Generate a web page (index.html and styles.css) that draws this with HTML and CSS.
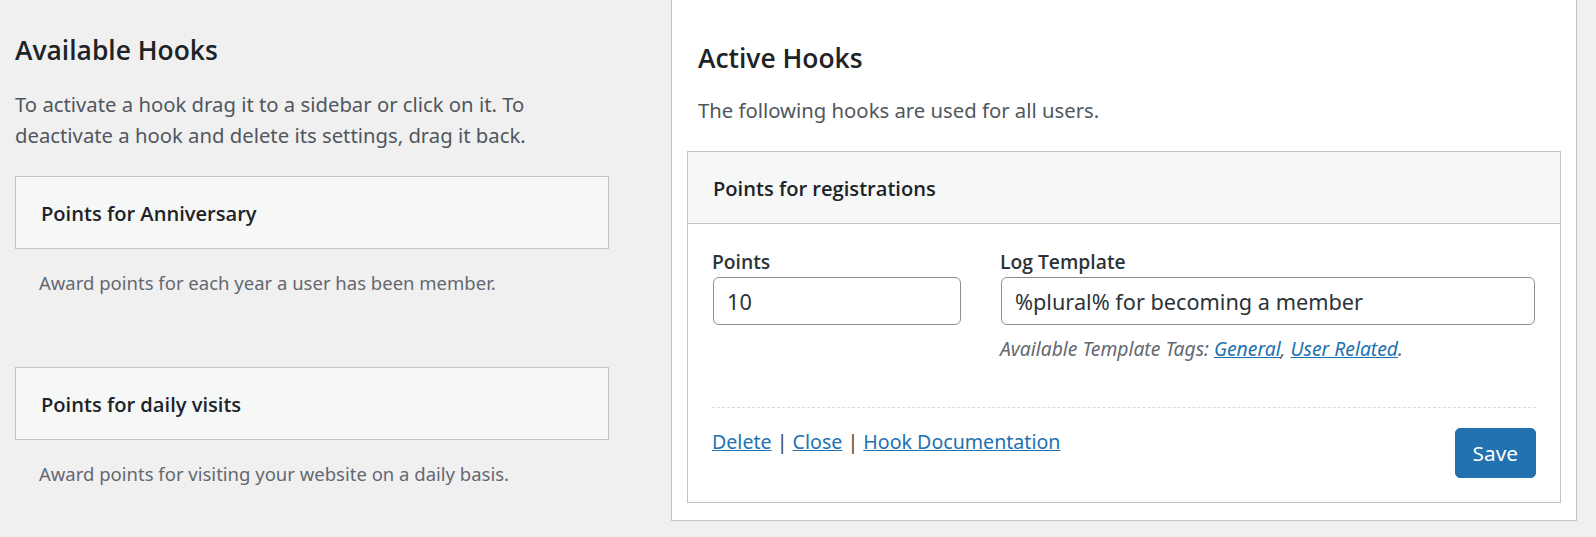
FILE: index.html
```html
<!DOCTYPE html>
<html>
<head>
  <meta charset="UTF-8">
  <title>Hooks</title>
  <link rel="stylesheet" href="styles.css">
</head>
<body>

  <div class="page">

    <!-- Left column: hooks that can be activated -->
    <div class="available">
      <h2 class="section-title">Available Hooks</h2>
      <p class="section-desc">To activate a hook drag it to a sidebar or click on it. To deactivate a hook and delete its settings, drag it back.</p>

      <div class="hook-list">
        <div class="hook">
          <div class="hook-top">
            <h3 class="hook-title">Points for Anniversary</h3>
          </div>
          <p class="hook-desc">Award points for each year a user has been member.</p>
        </div>
        <div class="hook">
          <div class="hook-top">
            <h3 class="hook-title">Points for daily visits</h3>
          </div>
          <p class="hook-desc">Award points for visiting your website on a daily basis.</p>
        </div>
      </div>
    </div>

    <!-- Right column: hooks in use -->
    <div class="active">
      <h2 class="section-title">Active Hooks</h2>
      <p class="section-desc">The following hooks are used for all users.</p>

      <div class="hook-box">
        <div class="hook-top">
          <h3 class="hook-title">Points for registrations</h3>
        </div>
        <div class="hook-inside">
          <div class="fields">
            <div class="field">
              <label class="field-label" for="points">Points</label>
              <input class="field-input" id="points" type="text" value="10">
            </div>
            <div class="field">
              <label class="field-label" for="log">Log Template</label>
              <input class="field-input" id="log" type="text" value="%plural% for becoming a member">
              <p class="field-help">Available Template Tags: <a href="#">General</a>, <a href="#">User Related</a>.</p>
            </div>
          </div>
          <div class="hook-actions">
            <div class="hook-links">
              <a href="#">Delete</a> | <a href="#">Close</a> | <a href="#">Hook Documentation</a>
            </div>
            <button class="button-primary" type="button">Save</button>
          </div>
        </div>
      </div>
    </div>

  </div>

</body>
</html>
```

FILE: styles.css
```css
body {
  margin: 0;
  background-color: #f0f0f1;
  color: #1d2327;
  font-family: "Noto Sans", "Open Sans", sans-serif;
  font-size: 20.3px;
  line-height: 1.5;
}
a {
  color: #2271b1;
  text-decoration: underline;
}
.page {
  display: flex;
  align-items: flex-start;
  padding: 0 19px 0 15px;
}
/* Headings and intro text */
.section-title {
  margin: 0;
  font-family: "Open Sans", "Noto Sans", sans-serif;
  font-size: 26.4px;
  font-weight: 600;
  line-height: 31px;
  color: #1d2327;
}
.section-desc {
  margin: 23px 0 0;
  line-height: 31.2px;
  color: #50575e;
}
/* Left column */
.available {
  width: 594px;
  padding-top: 35px;
}
.hook-list {
  display: flex;
  flex-direction: column;
  gap: 70px;
  margin-top: 25px;
}
.hook-top {
  background-color: #f6f7f7;
  border: 1px solid #c3c4c7;
  padding: 25px 25px 23px;
}
.hook-title {
  margin: 0;
  font-family: "Open Sans", "Noto Sans", sans-serif;
  font-size: 20.1px;
  font-weight: 600;
  line-height: 23px;
  color: #1d2327;
  white-space: nowrap;
}
.hook-desc {
  margin: 20px 0 0;
  padding-left: 24px;
  font-size: 18.5px;
  line-height: 28px;
  color: #646970;
}
/* Right column */
.active {
  flex: 1;
  margin-left: 62px;
  padding: 43px 15px 17px;
  background-color: #ffffff;
  border: 1px solid #c3c4c7;
  border-top: 0;
}
.active .section-title,
.active .section-desc {
  padding-left: 11px;
}
.active .section-desc {
  margin-top: 21px;
}
.hook-box {
  margin-top: 25px;
  border: 1px solid #c3c4c7;
  background-color: #ffffff;
}
.hook-box .hook-top {
  border: 0;
  border-bottom: 1px solid #c3c4c7;
}
.hook-inside {
  padding: 25px 24px 24px;
}
.fields {
  display: grid;
  grid-template-columns: 250px 1fr;
  column-gap: 38px;
}
.field-label {
  display: block;
  font-family: "Open Sans", "Noto Sans", sans-serif;
  font-size: 19.3px;
  font-weight: 600;
  line-height: 25px;
  color: #2c3338;
}
.field-input {
  box-sizing: border-box;
  display: block;
  width: calc(100% - 2px);
  height: 48px;
  margin: 3px 1px 0;
  padding: 0 13px;
  border: 1px solid #8c8f94;
  border-radius: 6px;
  background-color: #ffffff;
  color: #2c3338;
  font-family: "Noto Sans", "Open Sans", sans-serif;
  font-size: 21.7px;
}
.field-help {
  margin: 12px 0 0;
  font-size: 19.3px;
  font-style: italic;
  line-height: 24px;
  color: #646970;
}
.hook-actions {
  display: flex;
  justify-content: space-between;
  align-items: flex-start;
  margin-top: 46px;
  padding-top: 20px;
  border-top: 1px dashed #dcdcde;
}
.hook-links {
  font-size: 19.6px;
  line-height: 28px;
  color: #3c434a;
}
.button-primary {
  height: 50px;
  padding: 0 17px;
  border: 1px solid #2271b1;
  border-radius: 5px;
  background-color: #2271b1;
  color: #ffffff;
  font-family: "Noto Sans", "Open Sans", sans-serif;
  font-size: 20.8px;
  cursor: pointer;
}
```
